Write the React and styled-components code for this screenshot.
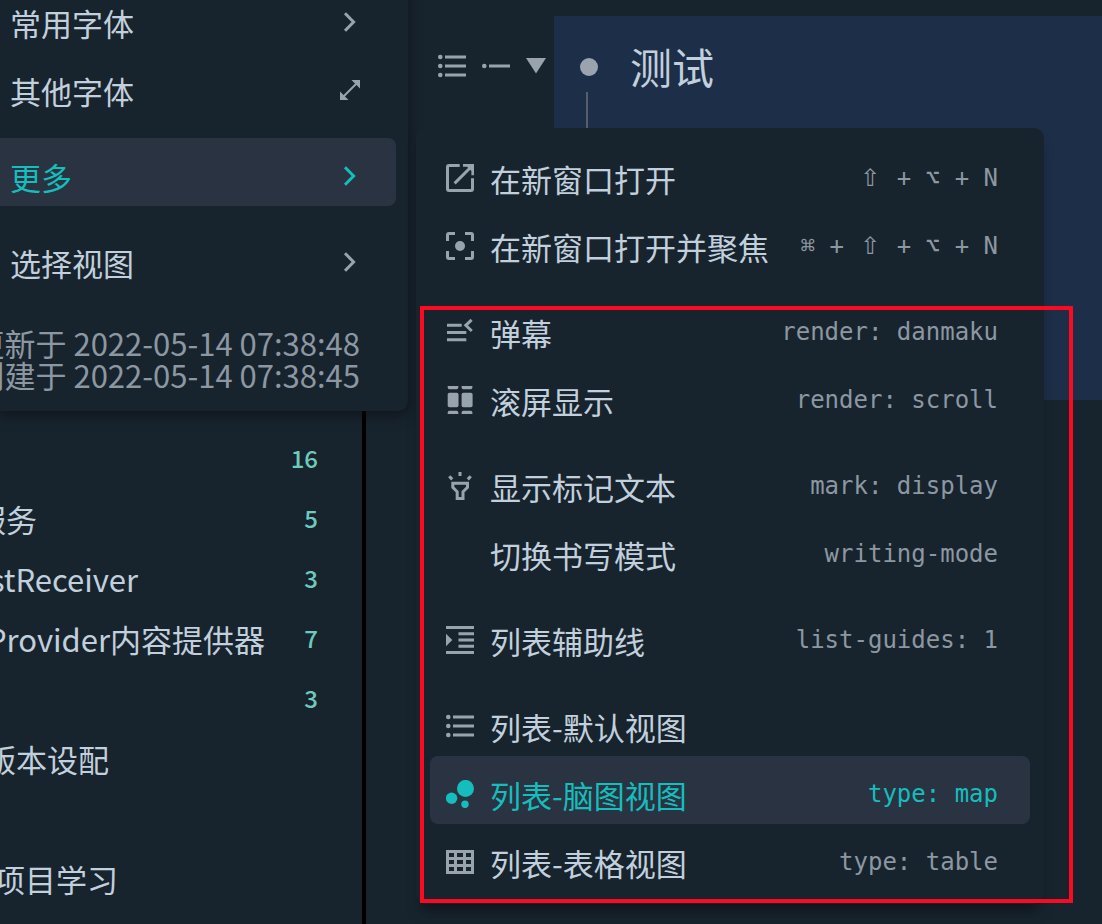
import React from "react";
import styled, { createGlobalStyle } from "styled-components";

const ListIcon = () => (
  <Icon viewBox="0 0 28 28">
    <circle cx="2.3" cy="5" r="2.3" />
    <circle cx="2.3" cy="14" r="2.3" />
    <circle cx="2.3" cy="23" r="2.3" />
    <path d="M7 3.5h21v3H7zM7 12.5h21v3H7zM7 21.5h21v3H7z" />
  </Icon>
);

const SingleIcon = () => (
  <Icon viewBox="0 0 28 28">
    <circle cx="2.3" cy="14" r="2.3" />
    <path d="M7 12.5h21v3H7z" />
  </Icon>
);

const OpenWindowIcon = () => (
  <Icon viewBox="0 0 28 28">
    <path className="line" d="M13.7 1.5H3Q1.5 1.5 1.5 3V25Q1.5 26.5 3 26.5H25Q26.5 26.5 26.5 25V14.3" />
    <path className="line" d="M8.6 19.4L24.5 3.5" />
    <path d="M17 0H28V11.2H25.4V7L21 2.8H17z" />
  </Icon>
);

const FocusIcon = () => (
  <Icon viewBox="0 0 28 28">
    <path
      className="line"
      d="M1.5 9V3Q1.5 1.5 3 1.5H9M19 1.5H25Q26.5 1.5 26.5 3V9M26.5 19V25Q26.5 26.5 25 26.5H19M9 26.5H3Q1.5 26.5 1.5 25V19"
    />
    <circle cx="14" cy="14" r="5" />
  </Icon>
);

const DanmakuIcon = () => (
  <Icon viewBox="0 0 28 28">
    <path d="M1 5.7h14.7v3H1zM1 13h19.3v3H1zM1 20.2h19.3v3H1z" />
    <path className="line" d="M25.6 1.8L19.8 7.3L25.8 13" />
  </Icon>
);

const ScrollIcon = () => (
  <Icon viewBox="0 0 28 28">
    <path d="M1.7 0h10.6v1.5q0 1.7-1.7 1.7H3.4q-1.7 0-1.7-1.7zM15.6 0h10.8v1.5q0 1.7-1.7 1.7h-7.4q-1.7 0-1.7-1.7z" />
    <rect x="1.7" y="6.7" width="10.8" height="14.6" rx="1.8" />
    <rect x="15.6" y="6.7" width="11" height="14.6" rx="1.8" />
    <path d="M1.7 28v-1.5q0-1.7 1.7-1.7h7.2q1.7 0 1.7 1.7V28zM15.6 28v-1.5q0-1.7 1.7-1.7h7.4q1.7 0 1.7 1.7V28z" />
  </Icon>
);

const FlashlightIcon = () => (
  <Icon viewBox="0 0 28 28">
    <path d="M12.5 0h3v4h-3z" />
    <path className="line" d="M3.2 4.2L6.2 7.4M24.8 4.2L21.8 7.4M6.8 11.3H21.5V15.3L17 19.8V26.5H11.2V19.8L6.8 15.3z" />
  </Icon>
);

const GuidesIcon = () => (
  <Icon viewBox="0 0 28 28">
    <path d="M0 0h28v3H0zM12.5 6.2H28v3H12.5zM12.5 12.5H28v3H12.5zM12.5 18.8H28v3H12.5zM0 25h28v3H0zM0 7.8L6.3 14L0 20.2z" />
  </Icon>
);

const BubblesIcon = () => (
  <Icon viewBox="0 0 28 28">
    <circle cx="19.5" cy="8.4" r="8.5" />
    <circle cx="5.6" cy="18.3" r="5.7" />
    <circle cx="19" cy="24.3" r="3.7" />
  </Icon>
);

const TableIcon = () => (
  <Icon viewBox="0 0 28 28">
    <path
      fillRule="evenodd"
      d="M0 2H28V26H0zM3 5v4h5V5zM11 5v4h6V5zM20 5v4h5V5zM3 12v4h5v-4zM11 12v4h6v-4zM20 12v4h5v-4zM3 19v4h5v-4zM11 19v4h6v-4zM20 19v4h5v-4z"
    />
  </Icon>
);

const ChevronIcon = () => (
  <SmallIcon viewBox="0 0 20 20">
    <path className="line" d="M5 1.2L13.6 10L5 18.8" />
  </SmallIcon>
);

const ExpandIcon = () => (
  <SmallIcon viewBox="0 0 20 20">
    <path d="M11.5 0H20V8.5zM0 11.5V20H8.5z" />
    <path className="thin" d="M3.5 16.5L16.5 3.5" />
  </SmallIcon>
);

const mainMenu = [
  [
    { label: "常用字体", icon: <ChevronIcon /> },
    { label: "其他字体", icon: <ExpandIcon /> },
  ],
  [{ label: "更多", icon: <ChevronIcon />, active: true }],
  [{ label: "选择视图", icon: <ChevronIcon /> }],
];

const moreMenu = [
  [
    { label: "在新窗口打开", icon: <OpenWindowIcon />, keys: ["⇧", "⌥", "N"] },
    { label: "在新窗口打开并聚焦", icon: <FocusIcon />, keys: ["⌘", "⇧", "⌥", "N"] },
  ],
  [
    { label: "弹幕", icon: <DanmakuIcon />, hint: "render: danmaku" },
    { label: "滚屏显示", icon: <ScrollIcon />, hint: "render: scroll" },
  ],
  [
    { label: "显示标记文本", icon: <FlashlightIcon />, hint: "mark: display" },
    { label: "切换书写模式", icon: <EmptyIcon />, hint: "writing-mode" },
  ],
  [{ label: "列表辅助线", icon: <GuidesIcon />, hint: "list-guides: 1" }],
  [
    { label: "列表-默认视图", icon: <ListIcon /> },
    { label: "列表-脑图视图", icon: <BubblesIcon />, hint: "type: map", active: true },
    { label: "列表-表格视图", icon: <TableIcon />, hint: "type: table" },
  ],
];

// the tree is scrolled sideways, so every label is cut at its left end
const docs = [
  { label: "", end: 0, count: 16 },
  { label: "服务", end: 37, count: 5 },
  { label: "stReceiver", end: 138, count: 3 },
  { label: "Provider内容提供器", end: 265, count: 7 },
  { label: "", end: 0, count: 3 },
  { label: "版本设配", end: 109 },
  { label: "", end: 0 },
  { label: "项目学习", end: 118 },
];

function EmptyIcon() {
  return <Icon viewBox="0 0 28 28" />;
}

const Shortcut = ({ keys }) => (
  <Hint>
    {keys.map((key, i) => (
      <React.Fragment key={key}>
        {i > 0 && " + "}
        {key === "⇧" ? <WideKey>{key}</WideKey> : key}
      </React.Fragment>
    ))}
  </Hint>
);

const App = () => {
  return (
    <>
      <GlobalStyle />
      <Page>
        <Sidebar>
          {docs.map((doc, i) => (
            <DocRow key={i} href="#">
              <DocLabel $end={doc.end}>{doc.label}</DocLabel>
              {doc.count && <Count>{doc.count}</Count>}
            </DocRow>
          ))}
        </Sidebar>

        <Editor>
          <Gutter>
            <ListIcon />
            <SingleIcon />
            <Triangle viewBox="0 0 20 16">
              <path d="M0 0H20L10 15.5z" />
            </Triangle>
          </Gutter>
          <Block>
            <Marker>
              <Bullet />
              <Guide />
            </Marker>
            <Title>测试</Title>
          </Block>
        </Editor>

        <MainMenu>
          {mainMenu.map((group, i) => (
            <Group key={i}>
              {group.map((item) => (
                <MainItem key={item.label} $active={item.active}>
                  <Label>{item.label}</Label>
                  {item.icon}
                </MainItem>
              ))}
            </Group>
          ))}
          <Dates>
            <span>更新于 2022-05-14 07:38:48</span>
            <span>创建于 2022-05-14 07:38:45</span>
          </Dates>
        </MainMenu>

        <MoreMenu>
          {moreMenu.map((group, i) => (
            <Group key={i}>
              {group.map((item) => (
                <Item key={item.label} $active={item.active}>
                  {item.icon}
                  <Label>{item.label}</Label>
                  {item.keys && <Shortcut keys={item.keys} />}
                  {item.hint && <Hint>{item.hint}</Hint>}
                </Item>
              ))}
            </Group>
          ))}
        </MoreMenu>

        <Highlight />
      </Page>
    </>
  );
};

/* ===================== STYLES ===================== */

const GlobalStyle = createGlobalStyle`
  * {
    box-sizing: border-box;
  }

  body {
    margin: 0;
    background: #17242e;
    color: #c2cfdc;
    font-family: "Noto Sans CJK SC", sans-serif;
    font-size: 31px;
  }
`;

const Page = styled.div`
  position: relative;
  display: flex;
  height: 100vh;
  overflow: hidden;
`;

const Icon = styled.svg`
  flex: none;
  width: 28px;
  height: 28px;
  fill: #99a3ae;

  .line {
    fill: none;
    stroke: #99a3ae;
    stroke-width: 3px;
  }
`;

const SmallIcon = styled(Icon)`
  width: 20px;
  height: 20px;

  .line {
    stroke-width: 3px;
  }

  .thin {
    stroke: #99a3ae;
    stroke-width: 2px;
  }
`;

const Triangle = styled(Icon)`
  width: 20px;
  height: 16px;
`;

const Sidebar = styled.nav`
  flex: none;
  width: 366px;
  padding-top: 428px;
  border-right: 4px solid #000;
  overflow: hidden;
`;

const DocRow = styled.a`
  display: flex;
  align-items: center;
  justify-content: space-between;
  height: 60px;
  padding-right: 44px;
  color: inherit;
  text-decoration: none;
  white-space: nowrap;
`;

const DocLabel = styled.span`
  display: flex;
  justify-content: flex-end;
  width: ${({ $end }) => $end}px;
  padding-top: 2px;
  line-height: 40px;
`;

const Count = styled.span`
  color: #6fc9bd;
  font-size: 24px;
  font-weight: 500;
  line-height: 40px;
`;

const Editor = styled.main`
  flex: 1;
  display: flex;
  align-items: flex-start;
  padding-top: 16px;
`;

const Gutter = styled.div`
  display: flex;
  align-items: center;
  gap: 16px;
  height: 100px;
  padding: 0 8px 0 72px;
`;

const Block = styled.section`
  flex: 1;
  display: flex;
  align-items: flex-start;
  gap: 32px;
  height: 384px;
  padding-left: 26px;
  background: #1d2e48;
`;

const Marker = styled.div`
  display: flex;
  flex-direction: column;
  align-items: center;
  gap: 16px;
  width: 18px;
  padding-top: 42px;
`;

const Bullet = styled.span`
  width: 18px;
  height: 18px;
  border-radius: 50%;
  background: #9ba3af;
`;

const Guide = styled.span`
  width: 2px;
  height: 280px;
  margin-right: 4px;
  background: #565e6c;
`;

const Title = styled.h1`
  margin: 0;
  padding-top: 20px;
  font-size: 42px;
  font-weight: 400;
  line-height: 60px;
`;

const Menu = styled.div`
  position: absolute;
  background: #17242e;
`;

const MainMenu = styled(Menu)`
  top: -28px;
  left: 0;
  width: 408px;
  padding: 12px 12px 20px 0;
  border-radius: 0 10px 10px 0;
  box-shadow: 0 4px 14px rgba(12, 8, 14, 0.6);
`;

const MoreMenu = styled(Menu)`
  top: 128px;
  left: 416px;
  min-width: 628px;
  padding: 12px 14px;
  border-radius: 10px;
  box-shadow: 0 12px 14px -6px rgba(12, 8, 14, 0.6);
`;

const Group = styled.div`
  & + & {
    margin-top: 18px;
  }
`;

const Item = styled.button`
  display: flex;
  align-items: center;
  gap: 16px;
  width: 100%;
  height: 68px;
  padding: 8px 32px 0 16px;
  border: 0;
  border-radius: 8px;
  background: ${({ $active }) => ($active ? "#2a3341" : "transparent")};
  color: ${({ $active }) => ($active ? "#15bdbd" : "inherit")};
  font: inherit;
  text-align: left;
  white-space: nowrap;

  svg {
    fill: ${({ $active }) => ($active ? "#15bdbd" : "#99a3ae")};
  }

  .line {
    stroke: ${({ $active }) => ($active ? "#15bdbd" : "#99a3ae")};
  }

  span + span {
    color: ${({ $active }) => ($active ? "#15bdbd" : "#8d97a2")};
  }
`;

const MainItem = styled(Item)`
  padding: 8px 36px 0 10px;
  border-radius: 0 8px 8px 0;
`;

const Label = styled.span`
  flex: 1;
  padding-top: 2px;
  line-height: 40px;
`;

const Hint = styled.span`
  font-family: "DejaVu Sans Mono", monospace;
  font-size: 24px;
  line-height: 32px;
  white-space: pre;
`;

const WideKey = styled.kbd`
  display: inline-block;
  width: 24px;
  font-family: "DejaVu Sans", sans-serif;
  text-align: center;
`;

const Dates = styled.div`
  display: flex;
  flex-direction: column;
  align-items: flex-end;
  margin-top: 35px;
  padding-right: 36px;
  color: #8d97a2;
  line-height: 32px;
  white-space: nowrap;
`;

const Highlight = styled.div`
  position: absolute;
  top: 306px;
  left: 420px;
  width: 653px;
  height: 597px;
  border: 4px solid #fc0a22;
  pointer-events: none;
`;

export default App;
